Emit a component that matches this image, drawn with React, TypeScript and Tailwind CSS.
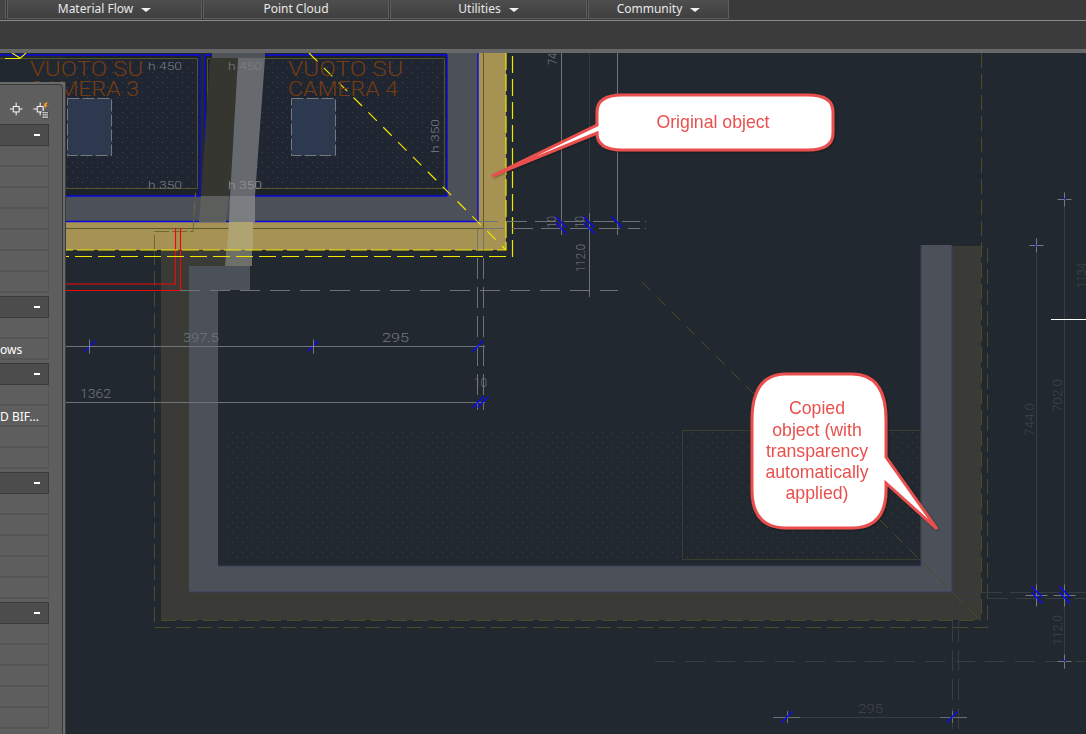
import type { ReactNode } from 'react'

const tabs = [
  { label: 'Material Flow', width: 'w-[195px]', arrow: true },
  { label: 'Point Cloud', width: 'w-[186px]', arrow: false },
  { label: 'Utilities', width: 'w-[197px]', arrow: true },
  { label: 'Community', width: 'w-[141px]', arrow: true },
]

const sections: { rows: (string | null)[] }[] = [
  { rows: [null, null, null, null, null, null, null] },
  { rows: [null, 'ows'] },
  { rows: [null, 'D BIF...', null, null] },
  { rows: [null, null, null, null, null] },
  { rows: [null, null, null, null, null] },
]

function Tab({ label, width, arrow }: { label: string; width: string; arrow: boolean }) {
  return (
    <div className={`${width} flex h-[19px] items-center justify-center gap-2 border border-t-0 border-[#5d5d5d] bg-gradient-to-b from-[#4e4e4e] to-[#3f3f3f] text-xs text-[#e8e8e8]`}>
      <span>{label}</span>
      {arrow && <span className="mt-px h-0 w-0 border-x-[5px] border-t-[4px] border-x-transparent border-t-[#f2f2f2]" />}
    </div>
  )
}

function Header() {
  return (
    <div className="shrink-0">
      <div className="flex h-[20px] gap-px bg-[#3a3a3a] font-['Noto_Sans',sans-serif]">
        <div className="h-[19px] w-[6px] border-r border-[#5d5d5d] bg-[#454545]" />
        {tabs.map(t => <Tab key={t.label} {...t} />)}
      </div>
      <div className="h-px bg-[#8a8a8a]" />
      <div className="h-[28px] bg-[#3b3b3b]" />
      <div className="h-[4px] bg-[#686868]" />
    </div>
  )
}

function SectionHead() {
  return (
    <div className="flex h-[22px] items-center justify-end border border-l-0 border-[#3a3a3a] bg-[#4c4c4c] pr-2">
      <span className="h-[2px] w-[6px] bg-white" />
    </div>
  )
}

function PanelIcons() {
  return (
    <svg width="50" height="24" viewBox="0 0 50 24" fill="none">
      <path d="M16.5 5.5V9M16.5 15v3.5M10 12h3.5M19.5 12H23" stroke="#fff" />
      <rect x="13.5" y="9.5" width="6" height="5.5" stroke="#fff" />
      <path d="M41 5.5V9M41 15v3.5M34 12h4M44 12h1" stroke="#fff" />
      <rect x="38" y="9.5" width="6" height="5.5" stroke="#fff" />
      <path d="M49 5l-3.5 1-1 3.5h1.5l-.5 2.5 3-4h-1.5z" fill="#f59a1f" />
      <rect x="43" y="14.5" width="6" height="7" fill="#fff" stroke="#222" strokeWidth=".6" />
      <path d="M43 16.8h6M43 19.1h6M45 14.5v7M47 14.5v7" stroke="#222" strokeWidth=".6" />
    </svg>
  )
}

// floating properties palette, only its right edge is on screen
function Palette() {
  return (
    <div className="absolute left-0 top-[82px] h-[652px] w-[66px] border-r border-[#3d3d3d] bg-[#6a6a6a] pr-[2px] pt-[2px] font-['Noto_Sans',sans-serif] text-xs text-white">
      <div className="h-full rounded-tr-sm border-r border-t border-[#3a3a3a] bg-[#5e5e5e] pr-[13px]">
        <div className="flex h-[39px] items-center pt-[8px]">
          <PanelIcons />
        </div>
        {sections.map((s, i) => (
          <div key={i} className="mb-[3px]">
            <SectionHead />
            {s.rows.map((r, j) => (
              <div key={j} className="flex h-[21px] items-center overflow-hidden whitespace-nowrap border-b-2 border-r border-b-[#555555] border-r-[#555555] pt-[2px]">
                {r}
              </div>
            ))}
          </div>
        ))}
      </div>
    </div>
  )
}

function Slash({ x, y, dir = 1, r = 5.5 }: { x: number; y: number; dir?: number; r?: number }) {
  return <line x1={x - r} y1={y - r * dir} x2={x + r} y2={y + r * dir} stroke="#0a0af5" strokeWidth="1.5" />
}

function Cross({ x, y, c = '#777b7f', r = 7 }: { x: number; y: number; c?: string; r?: number }) {
  return <path d={`M${x - r} ${y}H${x + r}M${x} ${y - r}V${y + r}`} stroke={c} fill="none" />
}

function CadText({ x, y, children, size = 13, c = '#74787c', rotate, len }: { x: number; y: number; children: ReactNode; size?: number; c?: string; rotate?: boolean; len?: number }) {
  return (
    <text
      x={x}
      y={y}
      fill={c}
      fontSize={size}
      textLength={len}
      lengthAdjust="spacingAndGlyphs"
      transform={rotate ? `rotate(-90 ${x} ${y})` : undefined}
      className="font-['Roboto',sans-serif] font-light"
    >
      {children}
    </text>
  )
}

function Callouts() {
  const red = '#e9504e'
  return (
    <g filter="url(#sh)">
      <path
        d="M622 95H808Q833 95 833 112V133Q833 150 808 150H622Q597 150 597 133L492 176L597 125V112Q597 95 622 95Z"
        fill="#fff"
        stroke={red}
        strokeWidth="3"
      />
      <text x="713" y="128" textAnchor="middle" fill={red} fontSize="17.7" className="font-['Liberation_Sans',sans-serif]">Original object</text>
      <path
        d="M786 374H852Q886 374 886 420V457L937 529L886 483V490Q886 528 852 528H786Q752 528 752 490V420Q752 374 786 374Z"
        fill="#fff"
        stroke={red}
        strokeWidth="3"
      />
      <g textAnchor="middle" fill={red} fontSize="17.7" className="font-['Liberation_Sans',sans-serif]">
        <text x="817" y="414">Copied</text>
        <text x="817" y="436">object (with</text>
        <text x="817" y="457">transparency</text>
        <text x="817" y="478">automatically</text>
        <text x="817" y="499">applied)</text>
      </g>
    </g>
  )
}

function Drawing() {
  const gray = '#6f7377'
  const dim = '#383d43'
  const olive = '#4a4c28'
  const yellow = '#f0e600'
  const orange = '#763c10'
  const room = '#1f2631'
  return (
    <svg viewBox="0 53 1086 681" width="1086" height="681" className="block" fill="none">
      <defs>
        <pattern id="dots" width="10" height="10" patternUnits="userSpaceOnUse">
          <rect width="1" height="1" x="2" y="2" fill="#3f4650" />
          <rect width="1" height="1" x="7" y="7" fill="#3f4650" />
        </pattern>
        <pattern id="dots2" width="10" height="10" patternUnits="userSpaceOnUse">
          <rect width="1" height="1" x="2" y="2" fill="#39404a" />
          <rect width="1" height="1" x="7" y="7" fill="#39404a" />
        </pattern>
        <filter id="sh" x="-10%" y="-10%" width="120%" height="120%">
          <feDropShadow dx="1" dy="1" stdDeviation="1" floodColor="#000" floodOpacity=".35" />
        </filter>
      </defs>

      {/* copied object */}
      <rect x="225" y="432" width="695" height="128" fill="url(#dots2)" />
      <path d="M161 250H225V266H189V592H952V246H981V620H161Z" fill="#3a3b36" />
      <path d="M189 266H250V290H218V566H921V245H952V592H189Z" fill="#4c5059" />
      <path d="M218 566H921V245M189 592H952V245" stroke="#3b3f63" />
      <rect x="682.5" y="430.5" width="238" height="129" stroke="#3a3c2c" />
      <path d="M154.5 250V627.5H987.5V246.5H981" stroke={olive} strokeDasharray="15 6" />
      <path d="M981.5 53V620M161 620.5H981" stroke={olive} strokeDasharray="15 6" />
      <path d="M642 282L981 621" stroke={olive} strokeDasharray="12 9" />

      {/* original object */}
      <path d="M66 222H478V53H506V250H66Z" fill="#a69353" />
      <path d="M66 196H447V53H478V222H66Z" fill="#4c5059" />
      <rect x="66" y="56" width="134" height="140" fill="#1c2229" />
      <rect x="205" y="56" width="242" height="140" fill="#1c2229" />
      <rect x="66" y="58" width="132" height="130" fill={room} />
      <rect x="207" y="58" width="237" height="130" fill={room} />
      <rect x="66" y="58" width="132" height="130" fill="url(#dots)" />
      <rect x="207" y="58" width="237" height="130" fill="url(#dots)" />
      <path d="M0 58.5H197.5V188.5H66M207.5 188.5V58.5H444.5V188.5H207.5" stroke="#55532a" />
      <path d="M0 55H200V196M205 196V55H447V196H66M478 53V221.5H66" stroke="#0808e0" strokeWidth="1.4" />
      <path d="M483.5 53V228.5H66" stroke="#5f5730" />

      {/* copy ghost running across the rooms */}
      <path d="M210 58H238L230 196H201Z" fill="#35362f" />
      <path d="M201 196H229L226 222H199Z" fill="#5c5e5c" />
      <path d="M212 53H265V58H212Z" fill="#4f5357" />
      <path d="M238 58H265L255 196H230Z" fill="#66696d" />
      <path d="M230 196H255V222H229Z" fill="#7b7e80" />
      <path d="M229 222H253V250H227Z" fill="#b0a372" />
      <path d="M226 250H252V266H225Z" fill="#6e6f66" />

      <path d="M154.5 250V231.5H193L195.5 193" stroke="#6d6a38" strokeDasharray="15 3" />
      <path d="M175.5 228V284H66M180.5 228V290.5H66" stroke="#ee0808" strokeWidth="1.2" />

      <path d="M506 53V250H66" stroke={yellow} strokeDasharray="17 4" strokeWidth="1.2" />
      <path d="M512.5 56V256.5H66" stroke={yellow} strokeDasharray="17 6" strokeWidth="1.2" />
      <path d="M309 53L506 250" stroke={yellow} strokeDasharray="12 9" strokeWidth="1.2" />
      <path d="M5 58.5H20L26 53M12 53L20 58" stroke={yellow} strokeWidth="1.2" />

      {/* room labels */}
      <CadText x={30} y={76} size={21} c={orange} len={113}>VUOTO  SU</CadText>
      <CadText x={288} y={76} size={21} c={orange} len={115}>VUOTO  SU</CadText>
      <CadText x={29} y={96} size={21} c={orange} len={110}>CAMERA 3</CadText>
      <CadText x={288} y={96} size={21} c={orange} len={110}>CAMERA 4</CadText>
      <rect x="67.5" y="98.5" width="44" height="57" fill="#2c394e" stroke="#76797c" strokeDasharray="12 3" />
      <rect x="291.5" y="98.5" width="44" height="57" fill="#2c394e" stroke="#76797c" strokeDasharray="12 3" />
      <CadText x={148} y={70} size={11.5} c="#7c8084" len={34}>h 450</CadText>
      <CadText x={228} y={70} size={11.5} c="#7c8084" len={34}>h 450</CadText>
      <CadText x={148} y={189} size={11.5} c="#7c8084" len={34}>h 350</CadText>
      <CadText x={228} y={189} size={11.5} c="#9a9c9c" len={34}>h 350</CadText>
      <CadText x={439} y={153} size={11.5} c="#7c8084" rotate len={34}>h 350</CadText>

      {/* dimensions, original */}
      <path d="M477 221.5H640M483 228.5H640" stroke={gray} strokeDasharray="21 8" />
      <path d="M477.5 229V410M483.5 229V410" stroke={gray} strokeDasharray="21 8" />
      <path d="M180 290.5H618" stroke={gray} strokeDasharray="20 10" />
      <path d="M561.5 53V235M617.5 53V235" stroke={gray} />
      <path d="M589.5 53V222" stroke="#363b41" />
      <path d="M589.5 213V297" stroke={gray} />
      <path d="M66 346.5H485M66 402.5H485" stroke={gray} />
      <rect x="645" y="221" width="1" height="1" fill={gray} />
      <rect x="645" y="228" width="1" height="1" fill={gray} />
      <Slash x={561} y={222} />
      <Slash x={561} y={228} />
      <Slash x={589} y={222} />
      <Slash x={589} y={228} />
      <Slash x={617} y={222} />
      <Slash x={90} y={346} dir={-1} />
      <Slash x={313} y={346} dir={-1} />
      <Slash x={478} y={346} dir={-1} />
      <Slash x={478} y={402} dir={-1} />
      <Slash x={483} y={402} dir={-1} />
      <Cross x={89.5} y={346.5} />
      <Cross x={313.5} y={346.5} />
      <CadText x={183} y={342} size={13.5} len={36}>397.5</CadText>
      <CadText x={382} y={342} size={13.5} len={27}>295</CadText>
      <CadText x={80} y={398} size={13.5} len={31}>1362</CadText>
      <CadText x={474} y={387} size={13.5} len={13}>10</CadText>
      <CadText x={585} y={272} size={13} rotate len={28}>112.0</CadText>
      <CadText x={556} y={228} size={13} rotate len={12}>10</CadText>
      <CadText x={584} y={228} size={13} rotate len={12}>10</CadText>
      <CadText x={557} y={65} size={13} rotate len={12}>74</CadText>

      {/* dimensions, copy */}
      <path d="M952.5 592V734M958.5 592V734" stroke={dim} strokeDasharray="21 8" />
      <path d="M952 592.5H1086M958 598.5H1086" stroke={dim} strokeDasharray="21 8" />
      <path d="M655 661.5H1086" stroke={dim} strokeDasharray="20 10" />
      <path d="M1036.5 246V603M1064.5 199V669M787 717.5H953" stroke={dim} />
      <path d="M773 717.5H800M940 717.5H967" stroke="#6a6e72" />
      <path d="M787.5 711V723M952.5 711V723" stroke="#6a6e72" />
      <Cross x={1036.5} y={245.5} />
      <Cross x={1064.5} y={199.5} />
      <Cross x={1036.5} y={595.5} r={11} />
      <Cross x={1064.5} y={595.5} r={11} />
      <Cross x={1064.5} y={661.5} />
      <Slash x={1037} y={592} />
      <Slash x={1037} y={598} />
      <Slash x={1065} y={592} />
      <Slash x={1065} y={598} />
      <Slash x={787} y={717} dir={-1} />
      <Slash x={952} y={717} dir={-1} />
      <path d="M1034 244l4 3M1062 197l4 3M1062 659l4 3" stroke="#0808e0" />
      <CadText x={1034} y={436} size={13} c="#41464b" rotate len={33}>744.0</CadText>
      <CadText x={1062} y={412} size={13} c="#41464b" rotate len={33}>702.0</CadText>
      <CadText x={1062} y={645} size={13} c="#41464b" rotate len={30}>112.0</CadText>
      <CadText x={1086} y={288} size={13} c="#41464b" rotate len={25}>1134</CadText>
      <CadText x={858} y={713} size={13.5} c="#41464b" len={25}>295</CadText>
      <path d="M1051 319.5H1086" stroke="#fff" />

      <Callouts />
    </svg>
  )
}

export default function App() {
  return (
    <div className="relative flex h-[734px] w-[1086px] flex-col overflow-hidden bg-[#22282f]">
      <Header />
      <Drawing />
      <Palette />
    </div>
  )
}
